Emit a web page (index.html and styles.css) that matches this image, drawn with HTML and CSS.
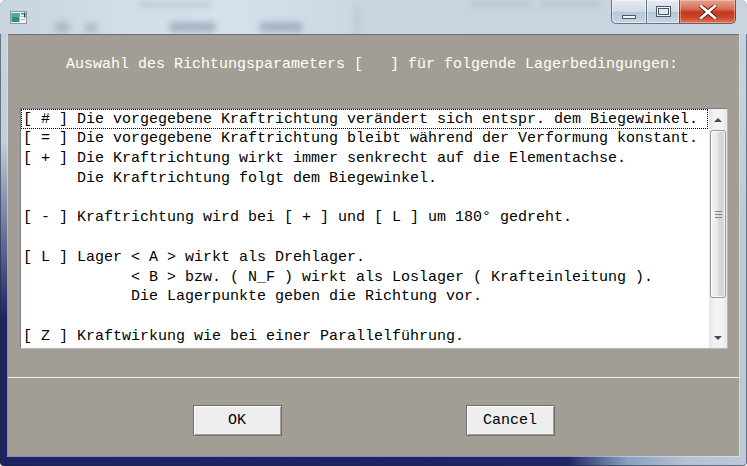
FILE: index.html
```html
<!DOCTYPE html>
<html lang="de">
<head>
<meta charset="utf-8">
<title>Richtungsparameter</title>
<link rel="stylesheet" href="styles.css">
</head>
<body>
<div class="window">
  <div class="titlebar">
    <div class="glass" aria-hidden="true">
      <span class="blob b1"></span><span class="blob b2"></span><span class="blob b3"></span>
      <span class="blob b4"></span><span class="blob b5"></span><span class="blob b6"></span>
      <span class="blob b7"></span><span class="blob b8"></span>
    </div>
    <svg class="app-icon" width="17" height="13" viewBox="0 0 17 13">
      <rect x="0.5" y="0.5" width="16" height="12" fill="#f4f6f6" stroke="#8a9aa3"/>
      <rect x="1.5" y="2" width="8" height="9" fill="#2f8f7a"/>
      <rect x="1.5" y="2" width="8" height="4" fill="#4fae8c"/>
      <rect x="11" y="2" width="4" height="1.5" fill="#6b7b85"/>
      <rect x="11" y="5" width="4" height="1" fill="#a7b3ba"/>
      <rect x="14" y="1.5" width="1.5" height="5" fill="#1f4a7a"/>
      <rect x="11" y="8" width="4" height="1" fill="#a7b3ba"/>
    </svg>
    <div class="caption-buttons">
      <div class="cap-btn cap-min"><span class="min-glyph"></span></div>
      <div class="cap-btn cap-max"><span class="max-glyph"></span></div>
      <div class="cap-btn cap-close">
        <svg width="18" height="14" viewBox="0 0 18 14"><path d="M2 1 L16 13 M16 1 L2 13" stroke="#5a1d12" stroke-width="4.4" stroke-linecap="square"/><path d="M2 1 L16 13 M16 1 L2 13" stroke="#ffffff" stroke-width="2.6" stroke-linecap="square"/></svg>
      </div>
    </div>
  </div>
  <div class="client">
    <p class="prompt">Auswahl des Richtungsparameters [   ] für folgende Lagerbedingungen:</p>
    <div class="listbox">
      <div class="list-lines">
        <div class="row focused">[ # ] Die vorgegebene Kraftrichtung verändert sich entspr. dem Biegewinkel.</div>
        <div class="row">[ = ] Die vorgegebene Kraftrichtung bleibt während der Verformung konstant.</div>
        <div class="row">[ + ] Die Kraftrichtung wirkt immer senkrecht auf die Elementachse.</div>
        <div class="row">      Die Kraftrichtung folgt dem Biegewinkel.</div>
        <div class="row"> </div>
        <div class="row">[ - ] Kraftrichtung wird bei [ + ] und [ L ] um 180° gedreht.</div>
        <div class="row"> </div>
        <div class="row">[ L ] Lager &lt; A &gt; wirkt als Drehlager.</div>
        <div class="row">            &lt; B &gt; bzw. ( N_F ) wirkt als Loslager ( Krafteinleitung ).</div>
        <div class="row">            Die Lagerpunkte geben die Richtung vor.</div>
        <div class="row"> </div>
        <div class="row">[ Z ] Kraftwirkung wie bei einer Parallelführung.</div>
      </div>
      <div class="scrollbar">
        <div class="sb-arrow"><span class="tri-up"></span></div>
        <div class="sb-track">
          <div class="sb-thumb"><span class="grip"></span></div>
        </div>
        <div class="sb-arrow"><span class="tri-down"></span></div>
      </div>
    </div>
    <div class="separator"></div>
    <div class="buttons">
      <button class="btn">OK</button>
      <button class="btn">Cancel</button>
    </div>
  </div>
</div>
</body>
</html>
```

FILE: styles.css
```css
* { box-sizing: border-box; }
html, body { margin: 0; padding: 0; }
body {
  width: 747px;
  height: 466px;
  overflow: hidden;
  font-family: "Liberation Mono", "Courier New", monospace;
}
.window {
  width: 747px;
  height: 466px;
  display: flex;
  flex-direction: column;
  padding: 0 8px 10px 8px;
  border-radius: 6px 6px 4px 4px;
  background:
    linear-gradient(to bottom, #c6d2de 0px, #c3d0dc 140px, rgba(190,204,218,0.55) 220px, rgba(190,204,218,0) 320px),
    linear-gradient(to right, #1b2362 0%, #1e2766 76%, #8aa0bd 84%, #b4c3d2 92%, #bcc9d6 100%);
  box-shadow: inset 0 0 0 1px rgba(30,40,60,0.55);
  overflow: hidden;
}
.titlebar {
  position: relative;
  height: 34px;
  margin: 0 -8px;
  flex: none;
}
.glass {
  position: absolute;
  inset: 0;
  overflow: hidden;
  border-radius: 6px 6px 0 0;
  background: linear-gradient(to right, #c8d4df 0%, #d3dee9 18%, #d6e1ec 30%, #c9d6e2 50%, #c8d4df 100%);
}
.blob {
  position: absolute;
  display: block;
  background: #8f9daa;
  filter: blur(3px);
  opacity: 0.55;
}
.b1 { left: 55px; top: 22px; width: 14px; height: 10px; }
.b2 { left: 85px; top: 24px; width: 12px; height: 8px; }
.b3 { left: 170px; top: 22px; width: 45px; height: 10px; background:#7f8d9c; }
.b4 { left: 260px; top: 22px; width: 42px; height: 10px; background:#7f8d9c; }
.b5 { left: 140px; top: 2px; width: 70px; height: 5px; opacity: 0.35; }
.b6 { left: 355px; top: 6px; width: 4px; height: 28px; opacity: 0.35; }
.b7 { left: 470px; top: 2px; width: 60px; height: 5px; opacity: 0.35; }
.b8 { left: 540px; top: 2px; width: 60px; height: 5px; opacity: 0.35; }
.app-icon {
  position: absolute;
  left: 10px;
  top: 11px;
}
.caption-buttons {
  position: absolute;
  top: 0;
  left: 611px;
  display: flex;
  height: 24px;
}
.cap-btn {
  height: 24px;
  display: flex;
  align-items: center;
  justify-content: center;
  border: 1px solid rgba(60,75,95,0.75);
  border-top: none;
}
.cap-min {
  width: 35px;
  border-radius: 0 0 0 5px;
  border-right: none;
  background: linear-gradient(to bottom, rgba(255,255,255,0.55), rgba(220,230,240,0.35) 50%, rgba(160,180,200,0.45) 51%, rgba(200,215,230,0.5));
  box-shadow: inset 0 0 0 1px rgba(255,255,255,0.5);
}
.cap-max {
  width: 33px;
  border-right: none;
  background: linear-gradient(to bottom, rgba(255,255,255,0.55), rgba(220,230,240,0.35) 50%, rgba(160,180,200,0.45) 51%, rgba(200,215,230,0.5));
  box-shadow: inset 0 0 0 1px rgba(255,255,255,0.5);
}
.cap-close {
  width: 57px;
  border-radius: 0 0 5px 0;
  background: linear-gradient(to bottom, #e8a493 0%, #d76b53 40%, #c4391f 52%, #c9452a 75%, #e07756 100%);
  box-shadow: inset 0 0 0 1px rgba(255,210,190,0.45);
}
.min-glyph {
  width: 14px;
  height: 4px;
  margin-top: 10px;
  background: #f4f7fa;
  border: 1px solid #4a5868;
}
.max-glyph {
  width: 15px;
  height: 11px;
  border: 1px solid #4a5868;
  background: #f4f7fa;
  box-shadow: inset 0 0 0 1px #f4f7fa, inset 0 0 0 2px #4a5868, inset 0 0 0 6px #dfe6ee;
  border-top-width: 1px;
}
.client {
  flex: 1;
  display: flex;
  flex-direction: column;
  background: #a39e95;
  border-top: 1px solid #6d6e72;
  box-shadow: 0 0 0 1px rgba(225,230,240,0.55);
}
.prompt {
  margin: 20px 0 0 58px;
  font-size: 15px;
  line-height: 20px;
  color: #ffffff;
  white-space: pre;
}
.listbox {
  margin: 33px 0 0 12px;
  width: 708px;
  height: 241px;
  display: flex;
  background: #ffffff;
  border: 1px solid #7c7f86;
  border-right-color: #b8b8b8;
  border-bottom-color: #b8b8b8;
}
.list-lines {
  flex: 1;
  overflow: hidden;
}
.row {
  height: 19.8px;
  line-height: 19.8px;
  padding-left: 2px;
  font-size: 15px;
  color: #000000;
  white-space: pre;
}
.row.focused {
  height: 20px;
  line-height: 19px;
  margin-right: 1px;
  padding-left: 1px;
  border: 1px dotted #000000;
}
.scrollbar {
  width: 18px;
  flex: none;
  display: flex;
  flex-direction: column;
  background: linear-gradient(to right, #e4e4e4, #f3f3f3 30%, #f3f3f3 70%, #e8e8e8);
}
.sb-arrow {
  height: 21px;
  flex: none;
  display: flex;
  align-items: center;
  justify-content: center;
}
.tri-up, .tri-down {
  width: 0;
  height: 0;
  border-left: 4px solid transparent;
  border-right: 4px solid transparent;
}
.tri-up { border-bottom: 4px solid #4a4a4a; }
.tri-down { border-top: 4px solid #4a4a4a; }
.sb-track {
  flex: 1;
  padding: 0 1px;
}
.sb-thumb {
  height: 168px;
  border: 1px solid #989898;
  border-radius: 3px;
  background: linear-gradient(to right, #f4f4f4, #e9e9e9 45%, #d9d9d9 55%, #d4d4d4);
  box-shadow: inset 0 0 0 1px rgba(255,255,255,0.8);
  display: flex;
  align-items: center;
  justify-content: center;
}
.grip {
  width: 7px;
  height: 7px;
  background: repeating-linear-gradient(to bottom, #666a70 0, #666a70 1px, transparent 1px, transparent 3px);
  opacity: 0.8;
}
.separator {
  margin-top: 28px;
  height: 1px;
  background: #f2efe9;
}
.buttons {
  margin-top: 27px;
  display: flex;
  justify-content: center;
  gap: 184px;
}
.btn {
  width: 89px;
  height: 31px;
  padding: 0;
  font-family: "Liberation Mono", "Courier New", monospace;
  font-size: 15px;
  color: #000000;
  background: #eeeeee;
  border: 1px solid #6f6f6f;
  border-radius: 0;
  box-shadow: inset 1px 1px 0 #ffffff, inset -1px -1px 0 #a0a0a0;
}
```
